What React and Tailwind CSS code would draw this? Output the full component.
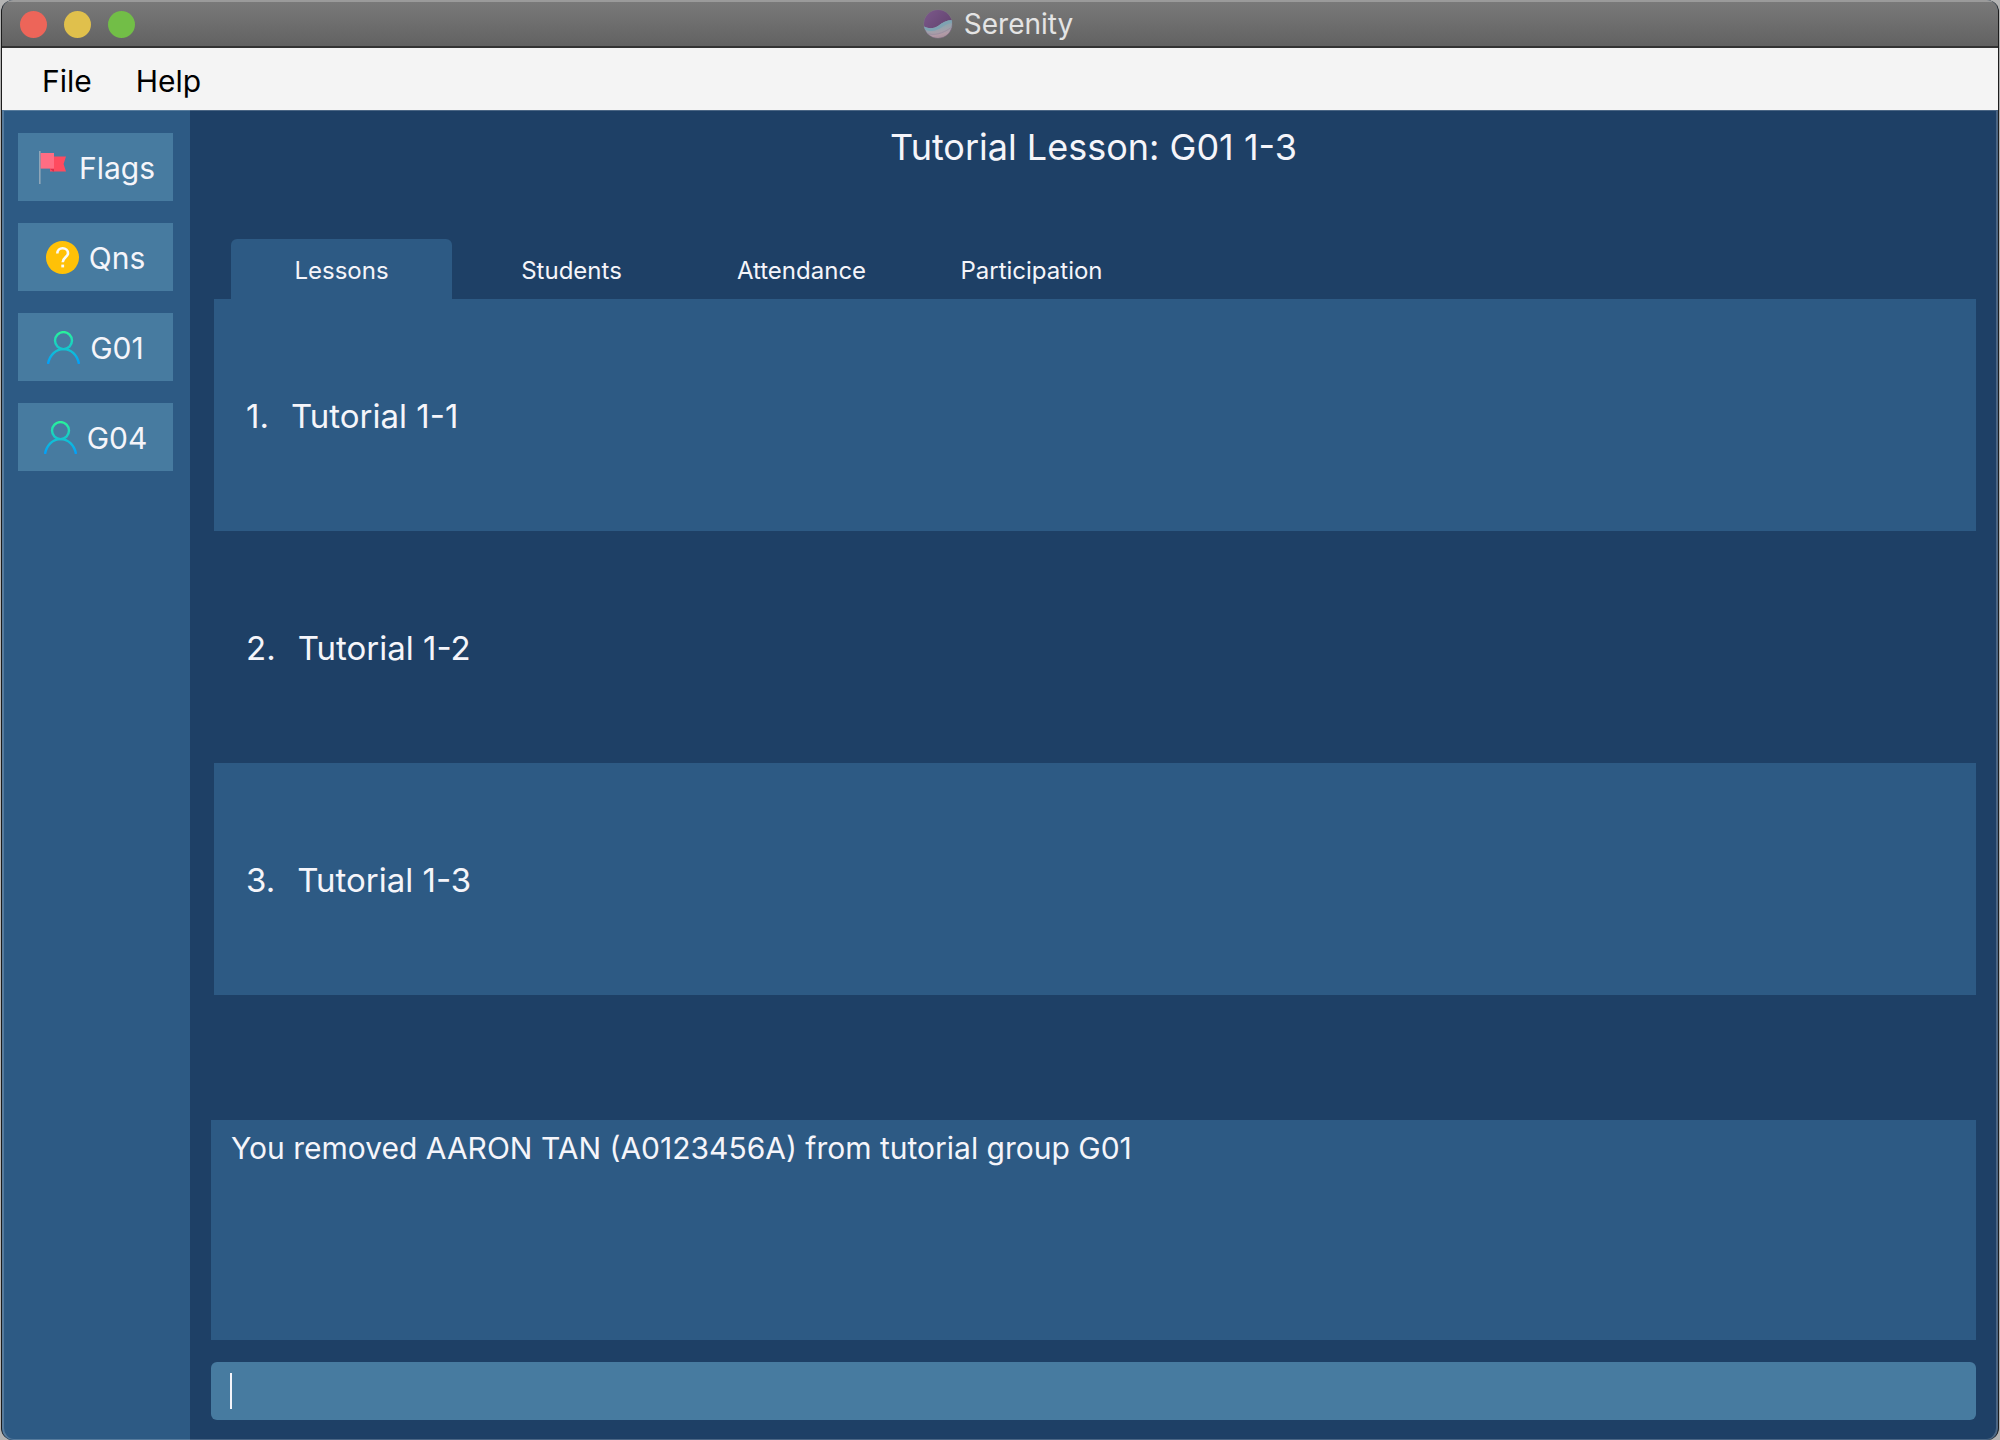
import React, { useState } from "react";

function LogoIcon() {
  return (
    <svg className="h-[30px] w-[30px]" viewBox="0 0 30 30" aria-hidden="true">
      <defs>
        <linearGradient id="logo-top" x1="0" y1="0" x2="1" y2="1">
          <stop offset="0" stopColor="#7d5a8c" />
          <stop offset="1" stopColor="#5a3c66" />
        </linearGradient>
        <linearGradient id="logo-bottom" x1="0.4" y1="0" x2="0.7" y2="1">
          <stop offset="0" stopColor="#7f9fae" />
          <stop offset="0.45" stopColor="#98a3ac" />
          <stop offset="0.75" stopColor="#b29aa6" />
          <stop offset="1" stopColor="#a08c94" />
        </linearGradient>
        <clipPath id="logo-clip">
          <circle cx="15" cy="15" r="14" />
        </clipPath>
      </defs>
      <circle cx="15" cy="15" r="14.5" fill="#7d7580" />
      <g clipPath="url(#logo-clip)">
        <rect width="30" height="30" fill="url(#logo-top)" />
        <path d="M0 17 C5 20 10 20 15 17 C20 13 24 11 30 11 V30 H0 Z" fill="url(#logo-bottom)" />
        <path d="M0 17 C5 20 10 20 15 17 C20 13 24 11 30 11 V14 C24 14 21 17 16 20 C10 23 5 22 0 20 Z" fill="#7ea3b2" />
        <path d="M3 24 C11 27 19 25 29 18" fill="none" stroke="#9a8fa0" strokeWidth="1" />
      </g>
    </svg>
  );
}

function FlagIcon() {
  return (
    <svg className="h-[33px] w-[33px] shrink-0" viewBox="0 0 33 33" aria-hidden="true">
      <rect x="3" y="0" width="1.6" height="33" fill="#8fa6b8" />
      <path d="M14 5.5 H30 L27.6 13 L30 20.5 H14 Z" fill="#ff4b5f" />
      <path d="M13.5 17.5 H18 V21 Z" fill="#d8304c" />
      <rect x="4.6" y="2" width="13.4" height="15.6" fill="#ff6d83" />
    </svg>
  );
}

function QuestionIcon() {
  return (
    <svg className="h-[33px] w-[33px] shrink-0" viewBox="0 0 33 33" aria-hidden="true">
      <circle cx="16.5" cy="16.5" r="16.5" fill="#ffc107" />
      <path
        d="M11.3 12.6 C11.3 9.2 13.6 7.3 16.6 7.3 C19.7 7.3 22 9.3 22 12.2 C22 16.2 16.7 16.6 16.7 21.3"
        fill="none"
        stroke="#fafafa"
        strokeWidth="2.6"
      />
      <rect x="15.3" y="23.6" width="2.8" height="2.8" fill="#fafafa" />
    </svg>
  );
}

function PersonIcon() {
  return (
    <svg className="h-[33px] w-[33px] shrink-0" viewBox="0 0 33 33" aria-hidden="true">
      <defs>
        <linearGradient id="person" gradientUnits="userSpaceOnUse" x1="0" y1="0" x2="0" y2="33">
          <stop offset="0" stopColor="#2af598" />
          <stop offset="1" stopColor="#009efd" />
        </linearGradient>
      </defs>
      <g fill="none" stroke="url(#person)" strokeWidth="2.4">
        <circle cx="16.5" cy="9.6" r="8.5" />
        <path d="M1 33 C2.6 24 9 18.1 16.5 18.1 C24 18.1 30.4 24 32 33" />
      </g>
    </svg>
  );
}

const sideItems = [
  { label: "Flags", icon: FlagIcon },
  { label: "Qns", icon: QuestionIcon },
  { label: "G01", icon: PersonIcon },
  { label: "G04", icon: PersonIcon },
];

const tabs = ["Lessons", "Students", "Attendance", "Participation"];
const lessons = ["Tutorial 1-1", "Tutorial 1-2", "Tutorial 1-3"];

export default function App() {
  const [active, setActive] = useState("Lessons");
  const [command, setCommand] = useState("");

  return (
    <div className="flex min-h-screen bg-[#b4b4b4] px-px font-['Inter',sans-serif] text-[#f5f5fa]">
      <div className="relative flex w-full flex-col overflow-hidden rounded-xl border-x border-[#1c1c1c] bg-[#1e4066]">
        <header className="flex h-12 items-center border-t-2 border-b-2 border-t-[#9a9a9a] border-b-[#333333] bg-linear-to-b from-[#797979] to-[#626262]">
          <div className="flex flex-1 gap-[17px] pl-[18px]">
            <button aria-label="Close" className="h-[27px] w-[27px] rounded-full bg-[#ed6559]" />
            <button aria-label="Minimise" className="h-[27px] w-[27px] rounded-full bg-[#e0c04c]" />
            <button aria-label="Zoom" className="h-[27px] w-[27px] rounded-full bg-[#72be47]" />
          </div>
          <div className="flex items-center gap-[11px] text-[28px] leading-8 text-[#e4e4e4]">
            <LogoIcon />
            <span>Serenity</span>
          </div>
          <div className="flex-1 pr-[22px]" />
        </header>

        <nav className="flex h-[62px] items-center gap-11 bg-[#f4f4f4] pt-1 pl-10 text-[30px] leading-10 text-black">
          <button>File</button>
          <button>Help</button>
        </nav>

        <div className="flex flex-1">
          <aside className="flex w-[188px] flex-col gap-[22px] bg-[#2d5a84] pt-[23px] pr-[17px] pl-4">
            {sideItems.map(({ label, icon: Icon }) => (
              <button
                key={label}
                className="flex h-[68px] items-center justify-center gap-[10px] bg-[#477ba0] pt-px text-[30px] leading-10"
              >
                <Icon />
                <span>{label}</span>
              </button>
            ))}
          </aside>

          <main className="flex min-w-0 flex-1 flex-col pr-[22px] pb-5 pl-[21px]">
            <h1 className="pt-3 text-center text-[36px] leading-[50px]">Tutorial Lesson: G01 1-3</h1>

            <div role="tablist" className="mt-[67px] flex gap-[9px] pl-5">
              {tabs.map((tab) => (
                <button
                  key={tab}
                  role="tab"
                  aria-selected={tab === active}
                  onClick={() => setActive(tab)}
                  className={
                    tab === active
                      ? "h-[60px] w-[221px] rounded-t-md bg-[#2d5a84] pt-1 text-[24px] leading-8"
                      : "h-[60px] w-[221px] rounded-t-md pt-1 text-[24px] leading-8"
                  }
                >
                  {tab}
                </button>
              ))}
            </div>

            <ol className="ml-[3px] flex-1">
              {lessons.map((lesson, i) => (
                <li
                  key={lesson}
                  className="flex h-[232px] items-center gap-[22px] pt-0.5 pl-8 text-[33px] leading-10 odd:bg-[#2d5a84]"
                >
                  <span>{i + 1}.</span>
                  <span>{lesson}</span>
                </li>
              ))}
            </ol>

            <p role="status" className="h-[220px] bg-[#2d5a84] px-5 pt-2 text-[30px] leading-10">
              You removed AARON TAN (A0123456A) from tutorial group G01
            </p>

            <label className="mt-[22px] flex h-[58px] items-center rounded-md bg-[#477ba0] pl-[19px]">
              <span className="h-9 w-0.5 bg-[#f5f5fa]" />
              <input
                aria-label="Command"
                value={command}
                onChange={(e) => setCommand(e.target.value)}
                className="h-full min-w-0 flex-1 bg-transparent text-[30px] outline-none"
              />
            </label>
          </main>
        </div>
        <div className="pointer-events-none absolute inset-x-0 top-[110px] bottom-0 rounded-b-xl border-x-2 border-t border-b border-white/20" />
      </div>
    </div>
  );
}
